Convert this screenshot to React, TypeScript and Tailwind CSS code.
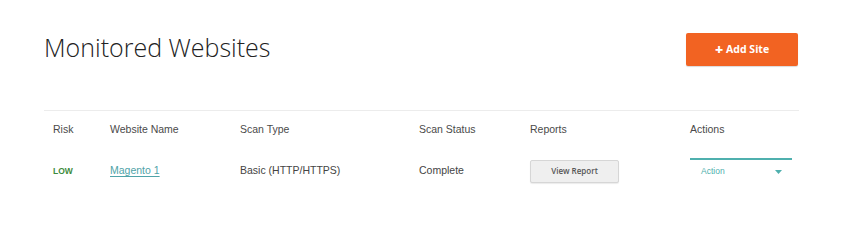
export default function App() {
  const cols =
    "grid grid-cols-[57px_130px_179px_111px_160px_118px] items-center";

  return (
    <div className="h-[233px] w-[848px] bg-white font-['Liberation_Sans',Arial,sans-serif] text-[#333]">
      <div className="ml-[44px] w-[755px]">
        {/* Page header */}
        <div className="flex h-[111px] items-start justify-between border-b border-[#ececec]">
          <h1 className="mt-[31px] font-['Open_Sans',sans-serif] text-[25px] font-light leading-[32px] text-[#222]">
            Monitored Websites
          </h1>
          <button className="mt-[33px] mr-[1px] flex h-[33px] w-[112px] items-center justify-center rounded-[2px] bg-[#f26322] font-['Open_Sans',sans-serif] text-[10.5px] font-bold text-white shadow-[0_1px_1px_rgba(0,0,0,0.15)]">
            <span className="mr-[3px] text-[14px] font-extrabold leading-none">+</span>
            Add Site
          </button>
        </div>

        {/* Table head */}
        <div className={`${cols} h-[37px] text-[10.5px] text-[#4a4a4a]`}>
          <div className="pl-[9px]">Risk</div>
          <div className="pl-[9px]">Website Name</div>
          <div className="pl-[9px]">Scan Type</div>
          <div className="pl-[9px]">Scan Status</div>
          <div className="pl-[9px]">Reports</div>
          <div className="pl-[9px]">Actions</div>
        </div>

        {/* Row */}
        <div className={`${cols} h-[46px] text-[10.5px] text-[#444]`}>
          <div className="pl-[9px] text-[8.5px] font-bold text-[#3d8b3d]">LOW</div>
          <div className="pl-[9px]">
            <a href="#" className="text-[#4fa3a8] underline underline-offset-2">
              Magento 1
            </a>
          </div>
          <div className="pl-[9px]">Basic (HTTP/HTTPS)</div>
          <div className="pl-[9px]">Complete</div>
          <div className="pl-[9px]">
            <button className="h-[23px] w-[89px] rounded-[2px] border border-[#d6d6d6] bg-[#efefef] font-['Open_Sans',sans-serif] text-[8px] font-semibold text-[#555] shadow-[0_1px_1px_rgba(0,0,0,0.08)]">
              View Report
            </button>
          </div>
          <div className="pl-[9px]">
            <div className="mt-[-1px] flex h-[26px] w-[102px] items-center justify-between border-t-2 border-[#4fb0ae] pl-[11px] pr-[10px] text-[8.5px] text-[#4fb0ae]">
              <span>Action</span>
              <svg width="7" height="4" viewBox="0 0 7 4">
                <path d="M0 0h7L3.5 4z" fill="#4fb0ae" />
              </svg>
            </div>
          </div>
        </div>
      </div>
    </div>
  );
}
